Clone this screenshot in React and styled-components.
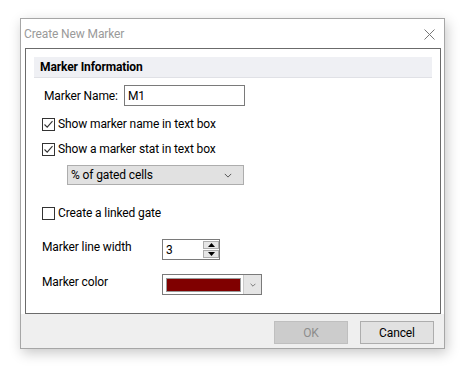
import React from "react";
import styled, { createGlobalStyle } from "styled-components";

const GlobalStyle = createGlobalStyle`
  html, body {
    margin: 0;
    padding: 0;
    background: #ffffff;
  }
  body {
    font-family: Roboto, "Liberation Sans", sans-serif;
    font-size: 12px;
    letter-spacing: -0.12px;
    color: #000000;
  }
`;

const Page = styled.div`
  padding: 18px 0 0 20px;
  width: 467px;
  height: 367px;
  box-sizing: border-box;
`;

const Window = styled.div`
  width: 425px;
  height: 331px;
  box-sizing: border-box;
  border: 1px solid #a6a6a6;
  background: #ffffff;
  box-shadow: 2px 4px 12px rgba(0, 0, 0, 0.22);
  display: flex;
  flex-direction: column;
`;

const TitleBar = styled.div`
  height: 29px;
  display: flex;
  align-items: center;
  justify-content: space-between;
  padding: 0 9px 0 3px;
`;

const Title = styled.span`
  color: #9a9a9a;
  margin-top: 1px;
`;

const CloseIcon = styled.svg`
  width: 11px;
  height: 11px;
  margin-top: 2px;
`;

const Content = styled.div`
  padding: 0 3px 0 4px;
`;

const Panel = styled.div`
  height: 266px;
  box-sizing: border-box;
  border: 1px solid #6b6b6b;
  padding: 8px 8px 0 8px;
`;

const SectionHeader = styled.div`
  height: 21px;
  box-sizing: border-box;
  background: #eff0f4;
  border-bottom: 1px solid #e0e1e6;
  font-weight: 700;
  display: flex;
  align-items: center;
  padding-left: 6px;
  margin-bottom: 7px;
`;

const Fields = styled.div`
  padding-left: 8px;
  display: flex;
  flex-direction: column;
  white-space: nowrap;
`;

const NameRow = styled.div`
  display: flex;
  align-items: center;
  height: 21px;
`;

const NameLabel = styled.span`
  width: 80px;
  padding-left: 2px;
`;

const TextBox = styled.div`
  width: ${(p) => p.$w}px;
  height: 21px;
  box-sizing: border-box;
  border: 1px solid #7a7a7a;
  background: #ffffff;
  display: flex;
  align-items: center;
  padding-left: 3px;
  position: relative;
`;

const CheckRow = styled.label`
  display: flex;
  align-items: center;
  height: 20px;
  margin-top: ${(p) => p.$top}px;
`;

const Box = styled.span`
  width: 13px;
  height: 13px;
  box-sizing: border-box;
  border: 1px solid #333333;
  background: #ffffff;
  margin-right: 3px;
  display: flex;
  align-items: center;
  justify-content: center;
`;

const Select = styled.div`
  width: 177px;
  height: 20px;
  box-sizing: border-box;
  margin: 6px 0 0 25px;
  background: #e1e1e1;
  border: 1px solid #adadad;
  display: flex;
  align-items: center;
  justify-content: space-between;
  padding: 0 11px 0 3px;
`;

const FieldRow = styled.div`
  display: flex;
  align-items: flex-start;
  margin-top: ${(p) => p.$top}px;
`;

const FieldLabel = styled.span`
  width: 120px;
  line-height: 16px;
`;

const SpinButtons = styled.div`
  position: absolute;
  right: 0;
  top: 1px;
  display: flex;
  flex-direction: column;
  gap: 1px;
`;

const SpinButton = styled.div`
  width: 16px;
  height: 8px;
  box-sizing: border-box;
  background: #e6e6e6;
  border: 1px solid #adadad;
  display: flex;
  align-items: center;
  justify-content: center;
`;

const ColorCombo = styled.div`
  width: 100px;
  height: 21px;
  box-sizing: border-box;
  border: 1px solid #7a7a7a;
  background: #ffffff;
  display: flex;
  align-items: stretch;
`;

const SwatchCell = styled.div`
  flex: 1;
  padding: 3px 2px 2px 3px;
  display: flex;
`;

const Swatch = styled.div`
  flex: 1;
  background: ${(p) => p.$color};
  border: 1px solid #9a9a9a;
`;

const ComboButton = styled.div`
  width: 17px;
  background: #e5e5e5;
  border-left: 1px solid #c9c9c9;
  display: flex;
  align-items: center;
  justify-content: center;
`;

const Footer = styled.div`
  flex: 1;
  background: #efefef;
  display: flex;
  justify-content: flex-end;
  gap: 12px;
  padding: 7px 10px 0 0;
`;

const Button = styled.div`
  width: 74px;
  height: 23px;
  box-sizing: border-box;
  display: flex;
  align-items: center;
  justify-content: center;
  background: ${(p) => (p.$disabled ? "#cccccc" : "#e1e1e1")};
  border: 1px solid ${(p) => (p.$disabled ? "#bfbfbf" : "#adadad")};
  color: ${(p) => (p.$disabled ? "#8c8c8c" : "#000000")};
`;

const Check = ({ checked }) => (
  <Box>
    {checked && (
      <svg width="11" height="11" viewBox="0 0 11 11">
        <polyline
          points="1.5,5.5 4.2,8.2 9.5,2.2"
          fill="none"
          stroke="#333333"
          strokeWidth="1.1"
        />
      </svg>
    )}
  </Box>
);

const Chevron = ({ w = 8 }) => (
  <svg width={w} height={w / 2 + 1} viewBox="0 0 10 6">
    <polyline points="1,1 5,5 9,1" fill="none" stroke="#444444" strokeWidth="1.1" />
  </svg>
);

const Triangle = ({ up }) => (
  <svg width="7" height="4" viewBox="0 0 7 4">
    <polygon points={up ? "0,4 7,4 3.5,0" : "0,0 7,0 3.5,4"} fill="#000000" />
  </svg>
);

const App = () => {
  return (
    <Page>
      <GlobalStyle />
      <Window>
        <TitleBar>
          <Title>Create New Marker</Title>
          <CloseIcon viewBox="0 0 11 11">
            <path d="M0.5 0.5 L10.5 10.5 M10.5 0.5 L0.5 10.5" stroke="#777777" strokeWidth="1" />
          </CloseIcon>
        </TitleBar>
        <Content>
          <Panel>
            <SectionHeader>Marker Information</SectionHeader>
            <Fields>
              <NameRow>
                <NameLabel>Marker Name:</NameLabel>
                <TextBox $w={121}>M1</TextBox>
              </NameRow>
              <CheckRow $top={8}>
                <Check checked />
                Show marker name in text box
              </CheckRow>
              <CheckRow $top={5}>
                <Check checked />
                Show a marker stat in text box
              </CheckRow>
              <Select>
                <span>% of gated cells</span>
                <Chevron />
              </Select>
              <CheckRow $top={18}>
                <Check />
                Create a linked gate
              </CheckRow>
              <FieldRow $top={16}>
                <FieldLabel>Marker line width</FieldLabel>
                <TextBox $w={58}>
                  3
                  <SpinButtons>
                    <SpinButton>
                      <Triangle up />
                    </SpinButton>
                    <SpinButton>
                      <Triangle />
                    </SpinButton>
                  </SpinButtons>
                </TextBox>
              </FieldRow>
              <FieldRow $top={14}>
                <FieldLabel>Marker color</FieldLabel>
                <ColorCombo>
                  <SwatchCell>
                    <Swatch $color="#800000" />
                  </SwatchCell>
                  <ComboButton>
                    <Chevron w={6} />
                  </ComboButton>
                </ColorCombo>
              </FieldRow>
            </Fields>
          </Panel>
        </Content>
        <Footer>
          <Button $disabled>OK</Button>
          <Button>Cancel</Button>
        </Footer>
      </Window>
    </Page>
  );
};

export default App;
